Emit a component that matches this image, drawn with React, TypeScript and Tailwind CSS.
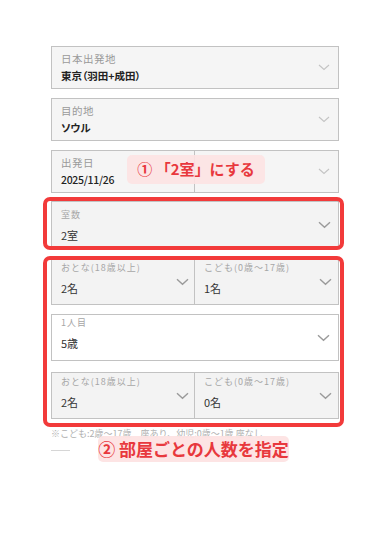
import React from 'react';

const font = { fontFamily: '"Noto Sans CJK JP", "Noto Sans", sans-serif' };

const Chevron = ({ light = false }: { light?: boolean }) =>
  light ? (
    <svg width="12" height="7" viewBox="0 0 12 7" className="shrink-0">
      <path d="M1 1l5 4.5L11 1" fill="none" stroke="#c4c4c4" strokeWidth="1.1" />
    </svg>
  ) : (
    <svg width="13" height="8" viewBox="0 0 13 8" className="shrink-0">
      <path d="M1 1.2l5.5 5L12 1.2" fill="none" stroke="#9a9a9a" strokeWidth="1.4" />
    </svg>
  );

const TopField = ({ label, value, bold = true }: { label: string; value: string; bold?: boolean }) => (
  <div className="flex-1 flex items-center justify-between pl-[9px] pr-[8px]">
    <div className="flex flex-col gap-[3px] [font-feature-settings:'palt']">
      <span className="text-[10.5px] leading-[14px] text-[#9a9a9a] tracking-[0.5px]">{label}</span>
      <span className={`text-[10.5px] leading-[14px] text-[#222] ${bold ? 'font-bold' : 'font-medium tracking-[-0.3px]'}`}>{value}</span>
    </div>
  </div>
);

const Cell = ({
  label,
  value,
  chevronPad = 'pr-[5px]',
  top = 'pt-[3px]',
}: {
  label: string;
  value: string;
  chevronPad?: string;
  top?: string;
}) => (
  <div className={`flex-1 flex items-center justify-between pl-[9px] ${chevronPad}`}>
    <div className={`self-start flex flex-col gap-[7px] ${top}`}>
      <span className="text-[9px] leading-[12px] text-[#a6a6a6] tracking-[1px]">{label}</span>
      <span className="text-[11px] leading-[14px] text-[#333]">{value}</span>
    </div>
    <Chevron />
  </div>
);

export default function App() {
  return (
    <div className="relative w-[390px] h-[550px] bg-white overflow-hidden" style={font}>
      <div className="ml-[51px] w-[288px] pt-[46px] flex flex-col">
        {/* departure */}
        <div className="h-[43px] flex items-center border border-[#c2c2c2] bg-[#f5f5f5] pr-[8px]">
          <TopField label="日本出発地" value="東京（羽田+成田）" />
          <Chevron light />
        </div>
        {/* destination */}
        <div className="mt-[9px] h-[43px] flex items-center border border-[#c2c2c2] bg-[#f5f5f5] pr-[8px]">
          <TopField label="目的地" value="ソウル" />
          <Chevron light />
        </div>
        {/* dates */}
        <div className="mt-[9px] h-[43px] flex border border-[#c2c2c2] bg-[#f5f5f5]">
          <div className="w-[143px] flex items-center border-r border-[#c2c2c2]">
            <TopField label="出発日" value="2025/11/26" bold={false} />
          </div>
          <div className="flex-1 flex items-center justify-end pr-[8px]">
            <Chevron light />
          </div>
        </div>
        {/* rooms */}
        <div className="mt-[8px] h-[47px] flex border border-[#c2c2c2] bg-[#f3f3f3]">
          <Cell label="室数" value="2室" chevronPad="pr-[7px]" top="pt-[7px]" />
        </div>
        {/* room 1 */}
        <div className="mt-[10px] h-[47px] flex border border-[#c2c2c2] bg-[#f3f3f3]">
          <div className="w-[143px] flex border-r border-[#c2c2c2]">
            <Cell label="おとな(18歳以上)" value="2名" />
          </div>
          <Cell label="こども(0歳〜17歳)" value="1名" chevronPad="pr-[6px]" />
        </div>
        <div className="mt-[9px] h-[47px] flex border border-[#c2c2c2] bg-white">
          <Cell label="1人目" value="5歳" chevronPad="pr-[8px]" top="pt-[2px]" />
        </div>
        {/* room 2 */}
        <div className="mt-[11px] h-[47px] flex border border-[#c2c2c2] bg-[#f3f3f3]">
          <div className="w-[143px] flex border-r border-[#c2c2c2]">
            <Cell label="おとな(18歳以上)" value="2名" />
          </div>
          <Cell label="こども(0歳〜17歳)" value="0名" chevronPad="pr-[6px]" />
        </div>
        <p className="mt-[9px] text-[9px] leading-[12px] text-[#b0b0b0] whitespace-nowrap">
          ※こども:2歳〜17歳　座あり、幼児:0歳〜1歳 座なし
        </p>
        <div className="mt-[10px] w-[19px] h-px bg-[#d6d6d6]" />
      </div>

      {/* annotations */}
      <div className="absolute left-[43px] top-[197px] w-[301px] h-[53px] border-4 border-[#f23a3a] rounded-[7px]" />
      <div className="absolute left-[43px] top-[256px] w-[301px] h-[171px] border-4 border-[#f23a3a] rounded-[7px]" />
      <div className="absolute left-[127px] top-[155px] w-[138px] h-[29px] rounded-[5px] bg-[#fde3e3]/90 flex items-center justify-center">
        <span className="text-[15px] font-bold text-[#e8383d] whitespace-nowrap">① 「2室」にする</span>
      </div>
      <div className="absolute left-[98px] top-[436px] w-[191px] h-[26px] rounded-[5px] bg-[#fde3e3]/95 flex items-center justify-center">
        <span className="text-[17px] font-bold text-[#e8383d] whitespace-nowrap">② 部屋ごとの人数を指定</span>
      </div>
    </div>
  );
}
